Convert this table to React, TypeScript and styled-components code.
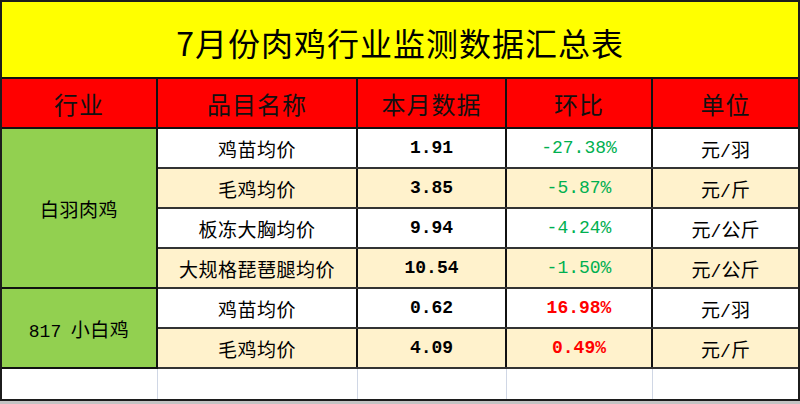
import React from "react";
import styled, { createGlobalStyle } from "styled-components";

const GlobalStyle = createGlobalStyle`
  html, body {
    margin: 0;
    padding: 0;
    background: #c4c4c4;
  }
  body {
    font-family: "Noto Sans CJK SC", "Noto Sans", sans-serif;
  }
`;

const Frame = styled.div`
  width: 800px;
  height: 401px;
  box-sizing: border-box;
  border: 2px solid #1c1c1c;
  background: #ffffff;
  overflow: hidden;
`;

const Sheet = styled.table`
  width: 796px;
  table-layout: fixed;
  border-collapse: collapse;
  border-style: hidden;
  color: #000;
`;

const Cell = styled.td`
  border: 2px solid #111;
  padding: 0;
  text-align: center;
  vertical-align: middle;
  white-space: nowrap;
`;

const TitleCell = styled(Cell)`
  height: 76px;
  background: #ffff00;
  font-size: 32px;
  letter-spacing: 1px;
  padding-top: 4px;
  box-sizing: border-box;
`;

const HeadCell = styled(Cell)`
  height: 48px;
  background: #ff0000;
  font-size: 24px;
  letter-spacing: 1px;
  color: #111;
`;

const DataRow = styled.tr<{ $shade: boolean }>`
  height: 40px;
  background: ${(p) => (p.$shade ? "#fff2cc" : "#ffffff")};
  & > td {
    border-top-color: #333;
    border-bottom-color: #333;
  }
`;

const GroupCell = styled(Cell)`
  background: #92d050;
  font-size: 19px;
  letter-spacing: 0.5px;
  border-top-color: #111 !important;
  border-bottom-color: #111 !important;
`;

const NameCell = styled(Cell)`
  font-size: 19px;
  letter-spacing: 0.5px;
`;

const Mono = styled.span`
  font-family: "Liberation Mono", "DejaVu Sans Mono", monospace;
  font-size: 18px;
  letter-spacing: 0;
`;

const ValueCell = styled(Cell)`
  font-family: "Liberation Mono", "DejaVu Sans Mono", monospace;
  font-size: 18px;
  font-weight: bold;
`;

const ChangeCell = styled(ValueCell)<{ $up: boolean }>`
  color: ${(p) => (p.$up ? "#ff0000" : "#00b050")};
  font-weight: ${(p) => (p.$up ? "bold" : "normal")};
`;

const UnitCell = styled(Cell)`
  font-size: 19px;
`;

const BlankCell = styled.td`
  height: 32px;
  padding: 0;
  border: 1px solid #d0d7e5;
`;

type Item = [string, string, string, string];

const groups: { name: string; items: Item[] }[] = [
  {
    name: "白羽肉鸡",
    items: [
      ["鸡苗均价", "1.91", "-27.38%", "元/羽"],
      ["毛鸡均价", "3.85", "-5.87%", "元/斤"],
      ["板冻大胸均价", "9.94", "-4.24%", "元/公斤"],
      ["大规格琵琶腿均价", "10.54", "-1.50%", "元/公斤"],
    ],
  },
  {
    name: "817 小白鸡",
    items: [
      ["鸡苗均价", "0.62", "16.98%", "元/羽"],
      ["毛鸡均价", "4.09", "0.49%", "元/斤"],
    ],
  },
];

const headers = ["行业", "品目名称", "本月数据", "环比", "单位"];
const widths = [155, 200, 149, 146, 146];

// split mixed text so ascii parts get the half-width font
function mixed(text: string) {
  return text.split(/([0-9A-Za-z./%-]+)/).map((part, i) =>
    /^[0-9A-Za-z./%-]+$/.test(part) ? <Mono key={i}>{part}</Mono> : part
  );
}

export default function App() {
  return (
    <>
      <GlobalStyle />
      <Frame>
        <Sheet>
          <colgroup>
            {widths.map((w, i) => (
              <col key={i} style={{ width: w }} />
            ))}
          </colgroup>
          <tbody>
            <tr>
              <TitleCell colSpan={5}>7月份肉鸡行业监测数据汇总表</TitleCell>
            </tr>
            <tr>
              {headers.map((h) => (
                <HeadCell key={h}>{h}</HeadCell>
              ))}
            </tr>
            {groups.map((g) =>
              g.items.map((item, i) => (
                <DataRow key={g.name + i} $shade={i % 2 === 1}>
                  {i === 0 && (
                    <GroupCell rowSpan={g.items.length}>
                      {g.name.split(" ").map((part, k) =>
                        k === 0 && /^\d+$/.test(part) ? (
                          <React.Fragment key={k}>
                            <Mono>{part}</Mono>
                            {"\u00a0\u00a0"}
                          </React.Fragment>
                        ) : (
                          <React.Fragment key={k}>{part}</React.Fragment>
                        )
                      )}
                    </GroupCell>
                  )}
                  <NameCell>{item[0]}</NameCell>
                  <ValueCell>{item[1]}</ValueCell>
                  <ChangeCell $up={!item[2].startsWith("-")}>{item[2]}</ChangeCell>
                  <UnitCell>{mixed(item[3])}</UnitCell>
                </DataRow>
              ))
            )}
            <tr>
              {widths.map((_, i) => (
                <BlankCell key={i} />
              ))}
            </tr>
          </tbody>
        </Sheet>
      </Frame>
    </>
  );
}
